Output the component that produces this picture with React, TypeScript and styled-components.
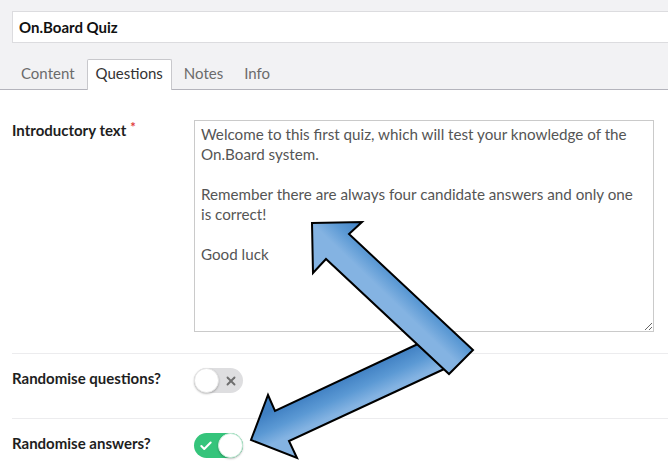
import styled, { createGlobalStyle } from "styled-components";
import { X, Check } from "lucide-react";

const GlobalStyle = createGlobalStyle`
  html, body {
    margin: 0;
    padding: 0;
    background: #fff;
    overflow: hidden;
  }
  body {
    font-family: Lato, "Open Sans", sans-serif;
    color: #222;
  }
`;

const Page = styled.div`
  position: relative;
  width: 668px;
  height: 468px;
  overflow: hidden;
`;

const Header = styled.div`
  background: #f2f2f4;
  padding-top: 11px;
`;

const TitleWrap = styled.div`
  padding-left: 12px;
`;

const TitleInput = styled.input`
  box-sizing: border-box;
  display: block;
  width: 700px;
  height: 32px;
  border: 1px solid #dcdcdf;
  background: #fff;
  padding: 0 6px;
  font-family: Lato, sans-serif;
  font-weight: 700;
  font-size: 15px;
  color: #111;
  outline: none;
`;

const TabBar = styled.div`
  display: flex;
  align-items: flex-end;
  height: 30px;
  margin-top: 16px;
  padding-left: 12px;
  border-bottom: 1px solid #b4b4bc;
`;

const Tab = styled.div<{ $active?: boolean }>`
  box-sizing: border-box;
  height: 31px;
  margin-bottom: -1px;
  margin-right: 3px;
  padding: 0 8px;
  line-height: 26px;
  font-size: 15px;
  color: ${(p) => (p.$active ? "#333" : "#6b6b6b")};
  background: ${(p) => (p.$active ? "#fff" : "transparent")};
  border: 1px solid ${(p) => (p.$active ? "#c8c8cc" : "transparent")};
  border-bottom: 0;
  border-radius: 2px 2px 0 0;
`;

const Form = styled.div`
  padding-left: 12px;
`;

const Row = styled.div<{ $first?: boolean }>`
  display: flex;
  width: 700px;
  border-top: ${(p) => (p.$first ? "none" : "1px solid #ececee")};
  padding: ${(p) => (p.$first ? "30px 0 21px" : "14px 0 25px")};
`;

const Label = styled.div<{ $tall?: boolean }>`
  width: 182px;
  flex-shrink: 0;
  font-weight: 700;
  font-size: 15px;
  line-height: ${(p) => (p.$tall ? "20px" : "15px")};
  color: #1e1e1e;
`;

const Required = styled.span`
  color: #e03a3a;
  font-size: 13px;
  vertical-align: 4px;
  margin-left: 4px;
`;

const TextArea = styled.textarea`
  box-sizing: border-box;
  width: 460px;
  height: 212px;
  border: 1px solid #cacaca;
  padding: 3px 8px 3px 6px;
  font-family: Lato, sans-serif;
  font-size: 15.2px;
  line-height: 20px;
  color: #555;
  outline: none;
  resize: both;
`;

const Toggle = styled.div<{ $on?: boolean }>`
  box-sizing: border-box;
  display: flex;
  flex-direction: ${(p) => (p.$on ? "row" : "row-reverse")};
  align-items: center;
  width: 49px;
  height: 25px;
  border-radius: 13px;
  background: ${(p) => (p.$on ? "#35c47b" : "#dedee0")};
`;

const ToggleIcon = styled.div`
  flex: 1;
  display: flex;
  justify-content: center;
  align-items: center;
`;

const Knob = styled.div<{ $on?: boolean }>`
  box-sizing: border-box;
  width: 25px;
  height: 25px;
  border-radius: 50%;
  background: #fff;
  border: 1px solid ${(p) => (p.$on ? "#cdeedd" : "#e6e6e6")};
  box-shadow: 0 1px 2px rgba(0, 0, 0, 0.25);
`;

const Overlay = styled.svg`
  position: absolute;
  top: 0;
  left: 0;
  pointer-events: none;
`;

const Switch = ({ on }: { on?: boolean }) => (
  <Toggle $on={on}>
    <ToggleIcon>
      {on ? (
        <Check size={14} strokeWidth={3.5} color="#fff" />
      ) : (
        <X size={14} strokeWidth={3.2} color="#6e6e6e" />
      )}
    </ToggleIcon>
    <Knob $on={on} />
  </Toggle>
);

const intro =
  "Welcome to this first quiz, which will test your knowledge of the On.Board system.\n\nRemember there are always four candidate answers and only one is correct!\n\nGood luck";

const Arrows = () => (
  <Overlay width={668} height={468} viewBox="0 0 668 468">
    <defs>
      <linearGradient id="gUp" gradientUnits="userSpaceOnUse" x1="423" y1="280" x2="398" y2="306">
        <stop offset="0" stopColor="#3f7fc2" />
        <stop offset="0.55" stopColor="#5b99d4" />
        <stop offset="1" stopColor="#84b3e2" />
      </linearGradient>
      <linearGradient id="gDown" gradientUnits="userSpaceOnUse" x1="350" y1="374" x2="363" y2="402">
        <stop offset="0" stopColor="#3f7fc2" />
        <stop offset="0.55" stopColor="#5b99d4" />
        <stop offset="1" stopColor="#84b3e2" />
      </linearGradient>
    </defs>
    <polygon
      points="435,336 275,411 268,395 251,440 297,458 289,441 455,364"
      fill="url(#gDown)"
      stroke="#000"
      strokeWidth={2}
      strokeLinejoin="miter"
    />
    <polygon
      points="312,223 362,222 349,234 473,350 449,374 326,259 313,273"
      fill="url(#gUp)"
      stroke="#000"
      strokeWidth={2}
      strokeLinejoin="miter"
    />
  </Overlay>
);

export default function App() {
  return (
    <Page>
      <GlobalStyle />
      <Header>
        <TitleWrap>
          <TitleInput value="On.Board Quiz" readOnly />
        </TitleWrap>
        <TabBar>
          <Tab>Content</Tab>
          <Tab $active>Questions</Tab>
          <Tab>Notes</Tab>
          <Tab>Info</Tab>
        </TabBar>
      </Header>
      <Form>
        <Row $first>
          <Label>
            Introductory text<Required>*</Required>
          </Label>
          <TextArea value={intro} readOnly />
        </Row>
        <Row>
          <Label $tall>Randomise questions?</Label>
          <Switch />
        </Row>
        <Row>
          <Label $tall>Randomise answers?</Label>
          <Switch on />
        </Row>
      </Form>
      <Arrows />
    </Page>
  );
}
